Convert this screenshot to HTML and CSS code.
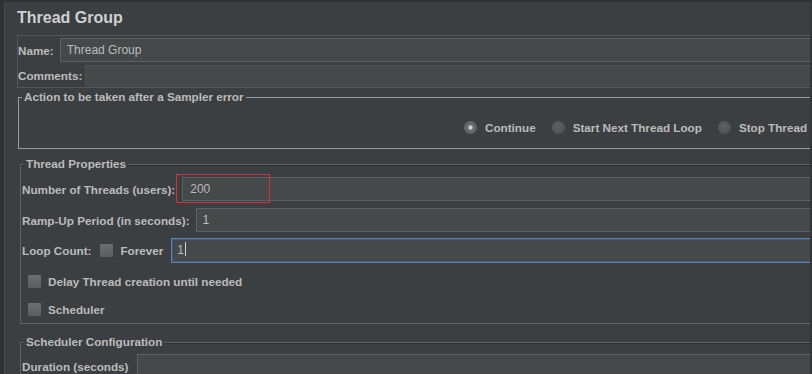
FILE: index.html
```html
<!DOCTYPE html>
<html lang="en">
<head>
    <meta charset="UTF-8">
    <title>Thread Group</title>
    <link rel="stylesheet" href="styles.css">
</head>
<body>
    <div class="page">
        <h1 class="title">Thread Group</h1>

        <div class="name-panel">
            <div class="row name-row">
                <span class="lbl gap-name">Name:</span>
                <div class="field">Thread Group</div>
            </div>
            <div class="row comments-row">
                <span class="lbl gap-comments">Comments:</span>
                <div class="field field-thin"></div>
            </div>
        </div>

        <fieldset class="group action">
            <legend>Action to be taken after a Sampler error</legend>
            <div class="radios">
                <span class="radio checked"></span><span class="opt">Continue</span>
                <span class="radio"></span><span class="opt">Start Next Thread Loop</span>
                <span class="radio"></span><span class="opt">Stop Thread</span>
            </div>
        </fieldset>

        <fieldset class="group etched props">
            <legend>Thread Properties</legend>
            <div class="prow row-threads">
                <span class="lbl gap-threads">Number of Threads (users):</span>
                <div class="field field-threads">200<span class="mark"></span></div>
            </div>
            <div class="prow row-ramp">
                <span class="lbl gap-ramp">Ramp-Up Period (in seconds):</span>
                <div class="field">1</div>
            </div>
            <div class="prow row-loop">
                <span class="lbl gap-loop">Loop Count:</span>
                <span class="check"></span>
                <span class="lbl gap-forever">Forever</span>
                <div class="field field-focus">1<span class="caret"></span></div>
            </div>
            <div class="prow row-delay">
                <span class="check check-indent"></span>
                <span class="lbl">Delay Thread creation until needed</span>
            </div>
            <div class="prow row-sched">
                <span class="check check-indent"></span>
                <span class="lbl">Scheduler</span>
            </div>
        </fieldset>

        <fieldset class="group etched sched">
            <legend>Scheduler Configuration</legend>
            <div class="prow row-duration">
                <span class="lbl gap-duration">Duration (seconds)</span>
                <div class="field"></div>
            </div>
        </fieldset>
    </div>
</body>
</html>
```

FILE: styles.css
```css
body {
    margin: 0;
    background: #3c3f41;
    font-family: "Liberation Sans", Arial, sans-serif;
    color: #bbbbbb;
    overflow: hidden;
}
.page {
    width: 812px;
    height: 374px;
    box-sizing: border-box;
    border-top: 2px solid #2f3133;
    border-left: 4px solid #2f3133;
    border-right: 2px solid #333537;
    padding-left: 13px;
    box-shadow: inset 1px 0 0 #4a4d4f;
    overflow: hidden;
}
.title {
    margin: 0;
    height: 33px;
    line-height: 32px;
    font-size: 16px;
    font-weight: bold;
    color: #cfd0d1;
}
.lbl {
    font-size: 11.7px;
    font-weight: bold;
    white-space: nowrap;
    flex: none;
}
.row, .prow {
    display: flex;
    align-items: center;
}
.field {
    flex: 1;
    height: 24px;
    box-sizing: border-box;
    background: #45494a;
    border: 1px solid #5e6163;
    border-right: none;
    padding-left: 6px;
    font-size: 12px;
    line-height: 22px;
    color: #bbbbbb;
    position: relative;
}

/* name / comments */
.name-panel {
    border: 1px solid #55585a;
    border-right: none;
}
.name-row { height: 28px; }
.comments-row { height: 23px; }
.field-thin {
    height: 21px;
    border-color: #4c4f51;
}
.gap-name { margin-right: 6px; }
.gap-comments { margin-right: 3px; }

/* titled borders */
.group {
    margin: 0;
    padding: 0;
    min-width: 0;
}
.group legend {
    padding: 0 2px;
    font-size: 11.7px;
    font-weight: bold;
    line-height: 14px;
    background: #3c3f41;
}
.action {
    margin: 2px 0 0 1px;
    border: 1px solid #9c9c9c;
    border-right: none;
}
.action legend { margin-left: 3px; }
.etched {
    margin-left: 3px;
    border: 1px solid #5f6264;
    border-right: none;
    box-shadow: inset 0 1px 0 #2e3032;
}
.etched legend { margin-left: 3px; }
.props { margin-top: 8px; }
.sched { margin-top: 11px; }

/* radios */
.radios {
    display: flex;
    align-items: center;
    height: 42px;
    padding: 2px 0 0 445px;
    white-space: nowrap;
    overflow: hidden;
}
.radio {
    flex: none;
    width: 13px;
    height: 13px;
    border-radius: 50%;
    background: radial-gradient(circle at 45% 40%, #5d6062, #4c4f51);
    margin-right: 8px;
}
.radio.checked {
    background: radial-gradient(circle, #d0d0d0 0 1.6px, #6a6d6f 2.6px, #585b5d);
}
.opt {
    flex: none;
    font-size: 11.7px;
    font-weight: bold;
    margin-right: 16px;
}
.opt:last-child { margin-right: 0; }

/* checkboxes */
.check {
    flex: none;
    width: 13px;
    height: 13px;
    border-radius: 1px;
    background: linear-gradient(#6c6f71, #5a5d5f);
}
.check-indent { margin: 0 7px 0 6px; }

/* thread properties rows */
.prow { padding-left: 1px; }
.row-threads { height: 36px; }
.row-ramp { height: 26px; }
.row-loop { height: 34px; }
.row-delay { height: 28px; }
.row-sched { height: 28px; }
.row-duration { height: 34px; }
.gap-threads { margin-right: 7px; }
.gap-ramp { margin-right: 6px; }
.gap-loop { margin-right: 9px; }
.gap-forever { margin: 0 8px 0 7px; }
.gap-duration { margin-right: 8px; }
.field-threads { padding-left: 7px; }
.field-focus {
    height: 25px;
    border: 1px solid #5b80b8;
    border-right: none;
    box-shadow: inset 0 1px 0 #3f5b84, inset 0 -1px 0 #3f5b84, inset 1px 0 0 #3f5b84;
    padding-left: 5px;
}
.caret {
    display: inline-block;
    width: 1px;
    height: 14px;
    margin-left: 1px;
    background: #d0d0d0;
    vertical-align: -2px;
}
.mark {
    position: absolute;
    left: -7px;
    top: -4px;
    width: 94px;
    height: 29px;
    box-sizing: border-box;
    border: 1px solid #d7303b;
}
```
